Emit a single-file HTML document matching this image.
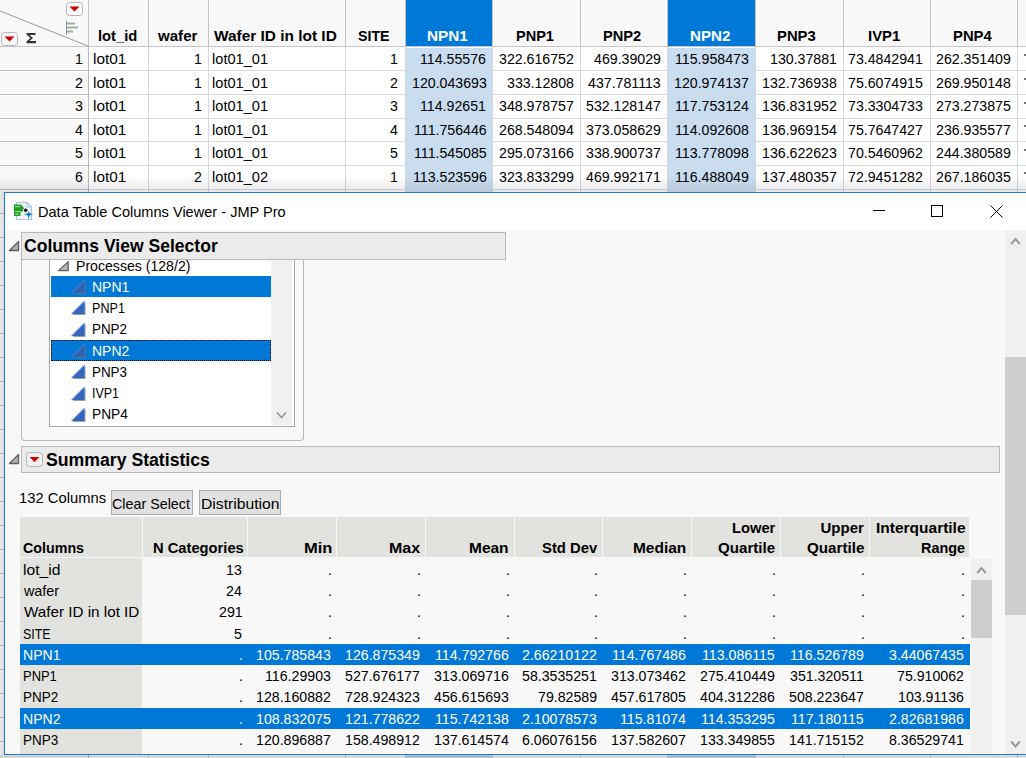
<!DOCTYPE html><html><head><meta charset="utf-8"><style>
*{margin:0;padding:0;box-sizing:border-box}
html,body{width:1026px;height:758px;overflow:hidden;background:#fff;font-family:"Liberation Sans",sans-serif;color:#000}
.abs{position:absolute}
.t{position:absolute;white-space:nowrap;line-height:1;transform-origin:0 0}
.b{font-weight:bold}
</style></head><body>
<div class="abs" style="left:0px;top:0px;width:1026px;height:46px;background:#f8f8f8;"></div>
<div class="abs" style="left:0px;top:46px;width:88px;height:712px;background:#f8f8f8;"></div>
<div class="abs" style="left:406px;top:0px;width:86px;height:46px;background:#0078d7;"></div>
<div class="abs" style="left:406px;top:48px;width:86px;height:710px;background:#c9ddf0;"></div>
<div class="abs" style="left:668px;top:0px;width:87px;height:46px;background:#0078d7;"></div>
<div class="abs" style="left:668px;top:48px;width:87px;height:710px;background:#c9ddf0;"></div>
<div class="abs" style="left:88px;top:0px;width:1px;height:46px;background:#c2c2c2;"></div>
<div class="abs" style="left:88px;top:46px;width:1px;height:712px;background:#b9b9b9;"></div>
<div class="abs" style="left:148px;top:0px;width:1px;height:46px;background:#c2c2c2;"></div>
<div class="abs" style="left:149px;top:0px;width:1px;height:46px;background:#fdfdfd;"></div>
<div class="abs" style="left:148px;top:46px;width:1px;height:712px;background:#d6d6de;"></div>
<div class="abs" style="left:208px;top:0px;width:1px;height:46px;background:#c2c2c2;"></div>
<div class="abs" style="left:209px;top:0px;width:1px;height:46px;background:#fdfdfd;"></div>
<div class="abs" style="left:208px;top:46px;width:1px;height:712px;background:#d6d6de;"></div>
<div class="abs" style="left:345px;top:0px;width:1px;height:46px;background:#c2c2c2;"></div>
<div class="abs" style="left:346px;top:0px;width:1px;height:46px;background:#fdfdfd;"></div>
<div class="abs" style="left:345px;top:46px;width:1px;height:712px;background:#d6d6de;"></div>
<div class="abs" style="left:405px;top:0px;width:1px;height:46px;background:#c2c2c2;"></div>
<div class="abs" style="left:405px;top:46px;width:1px;height:712px;background:#d6d6de;"></div>
<div class="abs" style="left:492px;top:0px;width:1px;height:46px;background:#c2c2c2;"></div>
<div class="abs" style="left:493px;top:0px;width:1px;height:46px;background:#fdfdfd;"></div>
<div class="abs" style="left:492px;top:46px;width:1px;height:712px;background:#d6d6de;"></div>
<div class="abs" style="left:580px;top:0px;width:1px;height:46px;background:#c2c2c2;"></div>
<div class="abs" style="left:581px;top:0px;width:1px;height:46px;background:#fdfdfd;"></div>
<div class="abs" style="left:580px;top:46px;width:1px;height:712px;background:#d6d6de;"></div>
<div class="abs" style="left:667px;top:0px;width:1px;height:46px;background:#c2c2c2;"></div>
<div class="abs" style="left:667px;top:46px;width:1px;height:712px;background:#d6d6de;"></div>
<div class="abs" style="left:755px;top:0px;width:1px;height:46px;background:#c2c2c2;"></div>
<div class="abs" style="left:756px;top:0px;width:1px;height:46px;background:#fdfdfd;"></div>
<div class="abs" style="left:755px;top:46px;width:1px;height:712px;background:#d6d6de;"></div>
<div class="abs" style="left:843px;top:0px;width:1px;height:46px;background:#c2c2c2;"></div>
<div class="abs" style="left:844px;top:0px;width:1px;height:46px;background:#fdfdfd;"></div>
<div class="abs" style="left:843px;top:46px;width:1px;height:712px;background:#d6d6de;"></div>
<div class="abs" style="left:930px;top:0px;width:1px;height:46px;background:#c2c2c2;"></div>
<div class="abs" style="left:931px;top:0px;width:1px;height:46px;background:#fdfdfd;"></div>
<div class="abs" style="left:930px;top:46px;width:1px;height:712px;background:#d6d6de;"></div>
<div class="abs" style="left:1017px;top:0px;width:1px;height:46px;background:#c2c2c2;"></div>
<div class="abs" style="left:1018px;top:0px;width:1px;height:46px;background:#fdfdfd;"></div>
<div class="abs" style="left:1017px;top:46px;width:1px;height:712px;background:#d6d6de;"></div>
<div class="abs" style="left:0px;top:46px;width:1026px;height:1px;background:#c6c6c6;"></div>
<div class="abs" style="left:0px;top:70px;width:88px;height:1px;background:#bebebe;"></div>
<div class="abs" style="left:0px;top:71px;width:88px;height:1px;background:#fdfdfd;"></div>
<div class="abs" style="left:89px;top:70px;width:937px;height:1px;background:#d8d8e0;"></div>
<div class="abs" style="left:0px;top:94px;width:88px;height:1px;background:#bebebe;"></div>
<div class="abs" style="left:0px;top:95px;width:88px;height:1px;background:#fdfdfd;"></div>
<div class="abs" style="left:89px;top:94px;width:937px;height:1px;background:#d8d8e0;"></div>
<div class="abs" style="left:0px;top:118px;width:88px;height:1px;background:#bebebe;"></div>
<div class="abs" style="left:0px;top:119px;width:88px;height:1px;background:#fdfdfd;"></div>
<div class="abs" style="left:89px;top:118px;width:937px;height:1px;background:#d8d8e0;"></div>
<div class="abs" style="left:0px;top:141px;width:88px;height:1px;background:#bebebe;"></div>
<div class="abs" style="left:0px;top:142px;width:88px;height:1px;background:#fdfdfd;"></div>
<div class="abs" style="left:89px;top:141px;width:937px;height:1px;background:#d8d8e0;"></div>
<div class="abs" style="left:0px;top:165px;width:88px;height:1px;background:#bebebe;"></div>
<div class="abs" style="left:0px;top:166px;width:88px;height:1px;background:#fdfdfd;"></div>
<div class="abs" style="left:89px;top:165px;width:937px;height:1px;background:#d8d8e0;"></div>
<div class="abs" style="left:0px;top:189px;width:88px;height:1px;background:#bebebe;"></div>
<div class="abs" style="left:0px;top:190px;width:88px;height:1px;background:#fdfdfd;"></div>
<div class="abs" style="left:89px;top:189px;width:937px;height:1px;background:#d8d8e0;"></div>
<div class="abs" style="left:0px;top:213px;width:88px;height:1px;background:#bebebe;"></div>
<div class="abs" style="left:0px;top:214px;width:88px;height:1px;background:#fdfdfd;"></div>
<div class="abs" style="left:89px;top:213px;width:937px;height:1px;background:#d8d8e0;"></div>
<div class="abs" style="left:0px;top:237px;width:88px;height:1px;background:#bebebe;"></div>
<div class="abs" style="left:0px;top:238px;width:88px;height:1px;background:#fdfdfd;"></div>
<div class="abs" style="left:89px;top:237px;width:937px;height:1px;background:#d8d8e0;"></div>
<div class="abs" style="left:0px;top:261px;width:88px;height:1px;background:#bebebe;"></div>
<div class="abs" style="left:0px;top:262px;width:88px;height:1px;background:#fdfdfd;"></div>
<div class="abs" style="left:89px;top:261px;width:937px;height:1px;background:#d8d8e0;"></div>
<div class="abs" style="left:0px;top:285px;width:88px;height:1px;background:#bebebe;"></div>
<div class="abs" style="left:0px;top:286px;width:88px;height:1px;background:#fdfdfd;"></div>
<div class="abs" style="left:89px;top:285px;width:937px;height:1px;background:#d8d8e0;"></div>
<div class="abs" style="left:0px;top:309px;width:88px;height:1px;background:#bebebe;"></div>
<div class="abs" style="left:0px;top:310px;width:88px;height:1px;background:#fdfdfd;"></div>
<div class="abs" style="left:89px;top:309px;width:937px;height:1px;background:#d8d8e0;"></div>
<div class="abs" style="left:0px;top:333px;width:88px;height:1px;background:#bebebe;"></div>
<div class="abs" style="left:0px;top:334px;width:88px;height:1px;background:#fdfdfd;"></div>
<div class="abs" style="left:89px;top:333px;width:937px;height:1px;background:#d8d8e0;"></div>
<div class="abs" style="left:0px;top:357px;width:88px;height:1px;background:#bebebe;"></div>
<div class="abs" style="left:0px;top:358px;width:88px;height:1px;background:#fdfdfd;"></div>
<div class="abs" style="left:89px;top:357px;width:937px;height:1px;background:#d8d8e0;"></div>
<div class="abs" style="left:0px;top:381px;width:88px;height:1px;background:#bebebe;"></div>
<div class="abs" style="left:0px;top:382px;width:88px;height:1px;background:#fdfdfd;"></div>
<div class="abs" style="left:89px;top:381px;width:937px;height:1px;background:#d8d8e0;"></div>
<div class="abs" style="left:0px;top:405px;width:88px;height:1px;background:#bebebe;"></div>
<div class="abs" style="left:0px;top:406px;width:88px;height:1px;background:#fdfdfd;"></div>
<div class="abs" style="left:89px;top:405px;width:937px;height:1px;background:#d8d8e0;"></div>
<div class="abs" style="left:0px;top:429px;width:88px;height:1px;background:#bebebe;"></div>
<div class="abs" style="left:0px;top:430px;width:88px;height:1px;background:#fdfdfd;"></div>
<div class="abs" style="left:89px;top:429px;width:937px;height:1px;background:#d8d8e0;"></div>
<div class="abs" style="left:0px;top:453px;width:88px;height:1px;background:#bebebe;"></div>
<div class="abs" style="left:0px;top:454px;width:88px;height:1px;background:#fdfdfd;"></div>
<div class="abs" style="left:89px;top:453px;width:937px;height:1px;background:#d8d8e0;"></div>
<div class="abs" style="left:0px;top:477px;width:88px;height:1px;background:#bebebe;"></div>
<div class="abs" style="left:0px;top:478px;width:88px;height:1px;background:#fdfdfd;"></div>
<div class="abs" style="left:89px;top:477px;width:937px;height:1px;background:#d8d8e0;"></div>
<div class="abs" style="left:0px;top:501px;width:88px;height:1px;background:#bebebe;"></div>
<div class="abs" style="left:0px;top:502px;width:88px;height:1px;background:#fdfdfd;"></div>
<div class="abs" style="left:89px;top:501px;width:937px;height:1px;background:#d8d8e0;"></div>
<div class="abs" style="left:0px;top:525px;width:88px;height:1px;background:#bebebe;"></div>
<div class="abs" style="left:0px;top:526px;width:88px;height:1px;background:#fdfdfd;"></div>
<div class="abs" style="left:89px;top:525px;width:937px;height:1px;background:#d8d8e0;"></div>
<div class="abs" style="left:0px;top:549px;width:88px;height:1px;background:#bebebe;"></div>
<div class="abs" style="left:0px;top:550px;width:88px;height:1px;background:#fdfdfd;"></div>
<div class="abs" style="left:89px;top:549px;width:937px;height:1px;background:#d8d8e0;"></div>
<div class="abs" style="left:0px;top:573px;width:88px;height:1px;background:#bebebe;"></div>
<div class="abs" style="left:0px;top:574px;width:88px;height:1px;background:#fdfdfd;"></div>
<div class="abs" style="left:89px;top:573px;width:937px;height:1px;background:#d8d8e0;"></div>
<div class="abs" style="left:0px;top:597px;width:88px;height:1px;background:#bebebe;"></div>
<div class="abs" style="left:0px;top:598px;width:88px;height:1px;background:#fdfdfd;"></div>
<div class="abs" style="left:89px;top:597px;width:937px;height:1px;background:#d8d8e0;"></div>
<div class="abs" style="left:0px;top:621px;width:88px;height:1px;background:#bebebe;"></div>
<div class="abs" style="left:0px;top:622px;width:88px;height:1px;background:#fdfdfd;"></div>
<div class="abs" style="left:89px;top:621px;width:937px;height:1px;background:#d8d8e0;"></div>
<div class="abs" style="left:0px;top:645px;width:88px;height:1px;background:#bebebe;"></div>
<div class="abs" style="left:0px;top:646px;width:88px;height:1px;background:#fdfdfd;"></div>
<div class="abs" style="left:89px;top:645px;width:937px;height:1px;background:#d8d8e0;"></div>
<div class="abs" style="left:0px;top:669px;width:88px;height:1px;background:#bebebe;"></div>
<div class="abs" style="left:0px;top:670px;width:88px;height:1px;background:#fdfdfd;"></div>
<div class="abs" style="left:89px;top:669px;width:937px;height:1px;background:#d8d8e0;"></div>
<div class="abs" style="left:0px;top:693px;width:88px;height:1px;background:#bebebe;"></div>
<div class="abs" style="left:0px;top:694px;width:88px;height:1px;background:#fdfdfd;"></div>
<div class="abs" style="left:89px;top:693px;width:937px;height:1px;background:#d8d8e0;"></div>
<div class="abs" style="left:0px;top:717px;width:88px;height:1px;background:#bebebe;"></div>
<div class="abs" style="left:0px;top:718px;width:88px;height:1px;background:#fdfdfd;"></div>
<div class="abs" style="left:89px;top:717px;width:937px;height:1px;background:#d8d8e0;"></div>
<div class="abs" style="left:0px;top:741px;width:88px;height:1px;background:#bebebe;"></div>
<div class="abs" style="left:0px;top:742px;width:88px;height:1px;background:#fdfdfd;"></div>
<div class="abs" style="left:89px;top:741px;width:937px;height:1px;background:#d8d8e0;"></div>
<div class="t b" style="left:98.42px;top:28.00px;font-size:15px;color:#000;transform:scaleX(0.984)">lot_id</div>
<div class="t b" style="left:158.40px;top:28.00px;font-size:15px;color:#000;transform:scaleX(1.005)">wafer</div>
<div class="t b" style="left:214.30px;top:28.00px;font-size:15px;color:#000;transform:scaleX(1.028)">Wafer ID in lot ID</div>
<div class="t b" style="left:357.75px;top:28.00px;font-size:15px;color:#000;transform:scaleX(0.947)">SITE</div>
<div class="t b" style="left:426.68px;top:28.00px;font-size:15px;color:#fff;transform:scaleX(1.021)">NPN1</div>
<div class="t b" style="left:515.83px;top:28.00px;font-size:15px;color:#000;transform:scaleX(0.968)">PNP1</div>
<div class="t b" style="left:602.52px;top:28.00px;font-size:15px;color:#000;transform:scaleX(0.976)">PNP2</div>
<div class="t b" style="left:690.49px;top:28.00px;font-size:15px;color:#fff;transform:scaleX(1.010)">NPN2</div>
<div class="t b" style="left:777.41px;top:28.00px;font-size:15px;color:#000;transform:scaleX(0.989)">PNP3</div>
<div class="t b" style="left:868.41px;top:28.00px;font-size:15px;color:#000;transform:scaleX(0.994)">IVP1</div>
<div class="t b" style="left:952.61px;top:28.00px;font-size:15px;color:#000;transform:scaleX(0.989)">PNP4</div>
<div class="t" style="left:74.69px;top:51.00px;font-size:15.5px;color:#000;transform:scaleX(0.914)">1</div>
<div class="t" style="left:92.58px;top:51.00px;font-size:15px;color:#000;transform:scaleX(1.023)">lot01</div>
<div class="t" style="left:193.89px;top:51.00px;font-size:15.5px;color:#000;transform:scaleX(0.914)">1</div>
<div class="t" style="left:212.43px;top:51.00px;font-size:15px;color:#000;transform:scaleX(0.975)">lot01_01</div>
<div class="t" style="left:389.69px;top:51.00px;font-size:15.5px;color:#000;transform:scaleX(0.914)">1</div>
<div class="t" style="left:420.19px;top:51.00px;font-size:15.5px;color:#000;transform:scaleX(0.914)">114.55576</div>
<div class="t" style="left:499.47px;top:51.00px;font-size:15.5px;color:#000;transform:scaleX(0.914)">322.616752</div>
<div class="t" style="left:593.78px;top:51.00px;font-size:15.5px;color:#000;transform:scaleX(0.914)">469.39029</div>
<div class="t" style="left:675.38px;top:51.00px;font-size:15.5px;color:#000;transform:scaleX(0.914)">115.958473</div>
<div class="t" style="left:769.78px;top:51.00px;font-size:15.5px;color:#000;transform:scaleX(0.914)">130.37881</div>
<div class="t" style="left:848.17px;top:51.00px;font-size:15.5px;color:#000;transform:scaleX(0.914)">73.4842941</div>
<div class="t" style="left:936.17px;top:51.00px;font-size:15.5px;color:#000;transform:scaleX(0.914)">262.351409</div>
<div class="abs" style="left:1024px;top:54px;width:2px;height:2px;background:rgba(0,0,0,0.55);"></div>
<div class="t" style="left:74.69px;top:74.54px;font-size:15.5px;color:#000;transform:scaleX(0.914)">2</div>
<div class="t" style="left:92.58px;top:74.54px;font-size:15px;color:#000;transform:scaleX(1.023)">lot01</div>
<div class="t" style="left:193.89px;top:74.54px;font-size:15.5px;color:#000;transform:scaleX(0.914)">1</div>
<div class="t" style="left:212.43px;top:74.54px;font-size:15px;color:#000;transform:scaleX(0.975)">lot01_01</div>
<div class="t" style="left:389.69px;top:74.54px;font-size:15.5px;color:#000;transform:scaleX(0.914)">2</div>
<div class="t" style="left:411.97px;top:74.54px;font-size:15.5px;color:#000;transform:scaleX(0.914)">120.043693</div>
<div class="t" style="left:506.78px;top:74.54px;font-size:15.5px;color:#000;transform:scaleX(0.914)">333.12808</div>
<div class="t" style="left:588.29px;top:74.54px;font-size:15.5px;color:#000;transform:scaleX(0.914)">437.781113</div>
<div class="t" style="left:674.47px;top:74.54px;font-size:15.5px;color:#000;transform:scaleX(0.914)">120.974137</div>
<div class="t" style="left:762.47px;top:74.54px;font-size:15.5px;color:#000;transform:scaleX(0.914)">132.736938</div>
<div class="t" style="left:848.17px;top:74.54px;font-size:15.5px;color:#000;transform:scaleX(0.914)">75.6074915</div>
<div class="t" style="left:936.17px;top:74.54px;font-size:15.5px;color:#000;transform:scaleX(0.914)">269.950148</div>
<div class="abs" style="left:1024px;top:78px;width:2px;height:2px;background:rgba(0,0,0,0.55);"></div>
<div class="t" style="left:74.69px;top:98.08px;font-size:15.5px;color:#000;transform:scaleX(0.914)">3</div>
<div class="t" style="left:92.58px;top:98.08px;font-size:15px;color:#000;transform:scaleX(1.023)">lot01</div>
<div class="t" style="left:193.89px;top:98.08px;font-size:15.5px;color:#000;transform:scaleX(0.914)">1</div>
<div class="t" style="left:212.43px;top:98.08px;font-size:15px;color:#000;transform:scaleX(0.975)">lot01_01</div>
<div class="t" style="left:389.69px;top:98.08px;font-size:15.5px;color:#000;transform:scaleX(0.914)">3</div>
<div class="t" style="left:420.19px;top:98.08px;font-size:15.5px;color:#000;transform:scaleX(0.914)">114.92651</div>
<div class="t" style="left:499.47px;top:98.08px;font-size:15.5px;color:#000;transform:scaleX(0.914)">348.978757</div>
<div class="t" style="left:586.47px;top:98.08px;font-size:15.5px;color:#000;transform:scaleX(0.914)">532.128147</div>
<div class="t" style="left:675.38px;top:98.08px;font-size:15.5px;color:#000;transform:scaleX(0.914)">117.753124</div>
<div class="t" style="left:762.47px;top:98.08px;font-size:15.5px;color:#000;transform:scaleX(0.914)">136.831952</div>
<div class="t" style="left:848.17px;top:98.08px;font-size:15.5px;color:#000;transform:scaleX(0.914)">73.3304733</div>
<div class="t" style="left:936.17px;top:98.08px;font-size:15.5px;color:#000;transform:scaleX(0.914)">273.273875</div>
<div class="abs" style="left:1024px;top:102px;width:2px;height:2px;background:rgba(0,0,0,0.55);"></div>
<div class="t" style="left:74.69px;top:121.62px;font-size:15.5px;color:#000;transform:scaleX(0.914)">4</div>
<div class="t" style="left:92.58px;top:121.62px;font-size:15px;color:#000;transform:scaleX(1.023)">lot01</div>
<div class="t" style="left:193.89px;top:121.62px;font-size:15.5px;color:#000;transform:scaleX(0.914)">1</div>
<div class="t" style="left:212.43px;top:121.62px;font-size:15px;color:#000;transform:scaleX(0.975)">lot01_01</div>
<div class="t" style="left:389.69px;top:121.62px;font-size:15.5px;color:#000;transform:scaleX(0.914)">4</div>
<div class="t" style="left:413.79px;top:121.62px;font-size:15.5px;color:#000;transform:scaleX(0.914)">111.756446</div>
<div class="t" style="left:498.55px;top:121.62px;font-size:15.5px;color:#000;transform:scaleX(0.914)">268.548094</div>
<div class="t" style="left:586.47px;top:121.62px;font-size:15.5px;color:#000;transform:scaleX(0.914)">373.058629</div>
<div class="t" style="left:675.38px;top:121.62px;font-size:15.5px;color:#000;transform:scaleX(0.914)">114.092608</div>
<div class="t" style="left:761.55px;top:121.62px;font-size:15.5px;color:#000;transform:scaleX(0.914)">136.969154</div>
<div class="t" style="left:848.17px;top:121.62px;font-size:15.5px;color:#000;transform:scaleX(0.914)">75.7647427</div>
<div class="t" style="left:936.17px;top:121.62px;font-size:15.5px;color:#000;transform:scaleX(0.914)">236.935577</div>
<div class="abs" style="left:1024px;top:125px;width:2px;height:2px;background:rgba(0,0,0,0.55);"></div>
<div class="t" style="left:74.69px;top:145.16px;font-size:15.5px;color:#000;transform:scaleX(0.914)">5</div>
<div class="t" style="left:92.58px;top:145.16px;font-size:15px;color:#000;transform:scaleX(1.023)">lot01</div>
<div class="t" style="left:193.89px;top:145.16px;font-size:15.5px;color:#000;transform:scaleX(0.914)">1</div>
<div class="t" style="left:212.43px;top:145.16px;font-size:15px;color:#000;transform:scaleX(0.975)">lot01_01</div>
<div class="t" style="left:389.69px;top:145.16px;font-size:15.5px;color:#000;transform:scaleX(0.914)">5</div>
<div class="t" style="left:413.79px;top:145.16px;font-size:15.5px;color:#000;transform:scaleX(0.914)">111.545085</div>
<div class="t" style="left:499.47px;top:145.16px;font-size:15.5px;color:#000;transform:scaleX(0.914)">295.073166</div>
<div class="t" style="left:586.47px;top:145.16px;font-size:15.5px;color:#000;transform:scaleX(0.914)">338.900737</div>
<div class="t" style="left:675.38px;top:145.16px;font-size:15.5px;color:#000;transform:scaleX(0.914)">113.778098</div>
<div class="t" style="left:762.47px;top:145.16px;font-size:15.5px;color:#000;transform:scaleX(0.914)">136.622623</div>
<div class="t" style="left:848.17px;top:145.16px;font-size:15.5px;color:#000;transform:scaleX(0.914)">70.5460962</div>
<div class="t" style="left:936.17px;top:145.16px;font-size:15.5px;color:#000;transform:scaleX(0.914)">244.380589</div>
<div class="abs" style="left:1024px;top:149px;width:2px;height:2px;background:rgba(0,0,0,0.55);"></div>
<div class="t" style="left:74.69px;top:168.70px;font-size:15.5px;color:#000;transform:scaleX(0.914)">6</div>
<div class="t" style="left:92.58px;top:168.70px;font-size:15px;color:#000;transform:scaleX(1.023)">lot01</div>
<div class="t" style="left:193.89px;top:168.70px;font-size:15.5px;color:#000;transform:scaleX(0.914)">2</div>
<div class="t" style="left:212.43px;top:168.70px;font-size:15px;color:#000;transform:scaleX(0.975)">lot01_02</div>
<div class="t" style="left:389.69px;top:168.70px;font-size:15.5px;color:#000;transform:scaleX(0.914)">1</div>
<div class="t" style="left:412.88px;top:168.70px;font-size:15.5px;color:#000;transform:scaleX(0.914)">113.523596</div>
<div class="t" style="left:499.47px;top:168.70px;font-size:15.5px;color:#000;transform:scaleX(0.914)">323.833299</div>
<div class="t" style="left:586.47px;top:168.70px;font-size:15.5px;color:#000;transform:scaleX(0.914)">469.992171</div>
<div class="t" style="left:675.38px;top:168.70px;font-size:15.5px;color:#000;transform:scaleX(0.914)">116.488049</div>
<div class="t" style="left:762.47px;top:168.70px;font-size:15.5px;color:#000;transform:scaleX(0.914)">137.480357</div>
<div class="t" style="left:848.17px;top:168.70px;font-size:15.5px;color:#000;transform:scaleX(0.914)">72.9451282</div>
<div class="t" style="left:936.17px;top:168.70px;font-size:15.5px;color:#000;transform:scaleX(0.914)">267.186035</div>
<div class="abs" style="left:1024px;top:172px;width:2px;height:2px;background:rgba(0,0,0,0.55);"></div>
<svg class="abs" style="left:0;top:0" width="88" height="46" viewBox="0 0 88 46"><line x1="0" y1="11" x2="88" y2="46" stroke="#9a9a9a" stroke-width="1"/><rect x="66.5" y="2.5" width="16" height="13" rx="3" fill="#f9f9f9" stroke="#b5b5b5"/><path d="M69.5 6.5 L79.5 6.5 L74.5 11.5 Z" fill="#d10000"/><rect x="1.5" y="32.5" width="16" height="13" rx="3" fill="#f9f9f9" stroke="#b5b5b5"/><path d="M4.5 36.5 L14.5 36.5 L9.5 41.5 Z" fill="#d10000"/><rect x="66" y="21" width="1" height="14" fill="#7d93b8"/><rect x="67" y="22.5" width="8" height="2" fill="#9cb09c"/><rect x="67" y="26.5" width="11" height="2" fill="#9cb09c"/><rect x="67" y="30.5" width="6" height="2" fill="#9cb09c"/><path d="M26.5 33 H35.5 V35 H29.5 L33 38 L29.5 41 H36 V43.2 H26.5 V41.5 L30.3 38 L26.5 34.5 Z" fill="#333"/></svg>
<div class="abs" style="left:0px;top:176px;width:1026px;height:16px;background:linear-gradient(to bottom,rgba(0,0,0,0),rgba(0,0,0,0.09));"></div>
<div class="abs" style="left:4px;top:192px;width:1024px;height:563px;background:#f8f8f8;border:1px solid #1a7fd4"></div>
<div class="abs" style="left:5px;top:193px;width:1022px;height:37px;background:#fff;"></div>
<div class="abs" style="left:5px;top:230px;width:1px;height:524px;background:#fff;"></div>
<div class="abs" style="left:5px;top:753px;width:1021px;height:1px;background:#fff;"></div>
<svg class="abs" style="left:10px;top:200px" width="26" height="24" viewBox="0 0 26 24"><path d="M6.5 2.5 H17 L21.5 7 V19.5 H6.5 Z" fill="#f3f7fc" stroke="#a9c3e3" stroke-width="1.2"/><path d="M17 2.5 V7 H21.5" fill="none" stroke="#a9c3e3" stroke-width="1"/><path d="M4 4.5 H11 L14 8 L12 12 H10.5 V16 H4 Z" fill="#1f9e1f"/><rect x="5" y="6" width="5" height="1.2" fill="#8fdc8f"/><rect x="5" y="11" width="6" height="1.2" fill="#8fdc8f"/><rect x="5" y="13.5" width="3.5" height="1.2" fill="#8fdc8f"/><circle cx="15.7" cy="10.3" r="1.8" fill="#111"/><path d="M18.7 10.2 C19.0 12.8 19.4 13.5 23.9 14.2 C19.4 14.9 19.0 15.6 18.7 20.8 C18.4 15.6 18.0 14.9 13.3 14.2 C18.0 13.5 18.4 12.8 18.7 10.2 Z" fill="#1c80d0"/></svg>
<div class="t" style="left:38.03px;top:204.00px;font-size:15px;color:#000;transform:scaleX(0.971)">Data Table Columns Viewer - JMP Pro</div>
<div class="abs" style="left:873px;top:210px;width:12px;height:1px;background:#000;"></div>
<div class="abs" style="left:931px;top:205px;width:12px;height:12px;border:1px solid #000"></div>
<svg class="abs" style="left:990px;top:205px" width="13" height="13" viewBox="0 0 13 13"><path d="M0.5 0.5 L12.5 12.5 M12.5 0.5 L0.5 12.5" stroke="#000" stroke-width="1"/></svg>
<div class="abs" style="left:1005px;top:230px;width:21px;height:524px;background:#f0f0f0;"></div>
<div class="abs" style="left:1005px;top:357px;width:21px;height:258px;background:#cdcdcd;"></div>
<svg class="abs" style="left:1009px;top:236px" width="13" height="10" viewBox="0 0 13 10"><path d="M2.2 8 L6.5 3 L10.8 8" fill="none" stroke="#9a9a9a" stroke-width="2"/></svg>
<svg class="abs" style="left:1009px;top:739px" width="13" height="10" viewBox="0 0 13 10"><path d="M2.2 2.5 L6.5 7.5 L10.8 2.5" fill="none" stroke="#9a9a9a" stroke-width="2"/></svg>
<svg class="abs" style="left:8px;top:240px" width="12" height="12" viewBox="0 0 12 12"><path d="M1.5 10.5 L10.5 1.5 L10.5 10.5 Z" fill="#b0b0b0" stroke="#5e5e5e" stroke-width="1.3" stroke-linejoin="round"/></svg>
<div class="abs" style="left:21px;top:259px;width:283px;height:182px;border:1px solid #b9b9b9;border-top:none;border-radius:0 0 4px 4px"></div>
<div class="abs" style="left:49px;top:259px;width:246px;height:168px;background:#fff;border:1px solid #a9a9a9;border-top:none"></div>
<div class="abs" style="left:271px;top:259px;width:21px;height:166px;background:#f0f0f0;"></div>
<svg class="abs" style="left:276px;top:411px" width="11" height="9" viewBox="0 0 11 9"><path d="M1 1.5 L5.5 6.5 L10 1.5" fill="none" stroke="#9a9a9a" stroke-width="1.8"/></svg>
<div class="abs" style="left:21px;top:232px;width:485px;height:28px;background:#ebebeb;border:1px solid #b9b9b9"></div>
<div class="t b" style="left:23.72px;top:237.40px;font-size:18px;color:#000;transform:scaleX(0.975)">Columns View Selector</div>
<svg class="abs" style="left:56.5px;top:259.5px" width="13" height="12" viewBox="0 0 13 12"><path d="M1.6 10.6 L11.2 1.6 L11.2 10.6 Z" fill="#b4b4b4" stroke="#606060" stroke-width="1.3" stroke-linejoin="round"/></svg>
<div class="t" style="left:76.06px;top:257.70px;font-size:15px;color:#000;transform:scaleX(0.940)">Processes (128/2)</div>
<div class="abs" style="left:51px;top:276px;width:220px;height:21px;background:#0078d7;"></div>
<svg class="abs" style="left:70px;top:278px" width="18" height="18" viewBox="0 0 18 18"><path d="M2.5 16 L15.5 3 L15.5 16 Z" fill="#777" opacity="0.7"/><path d="M1.5 15 L14.5 2 L14.5 15 Z" fill="#2f62b3"/><path d="M1.5 15 L14.5 2" stroke="#5b8fe0" stroke-width="1"/></svg>
<div class="t" style="left:91.67px;top:278.90px;font-size:15px;color:#fff;transform:scaleX(0.933)">NPN1</div>
<svg class="abs" style="left:70px;top:299px" width="18" height="18" viewBox="0 0 18 18"><path d="M2.5 16 L15.5 3 L15.5 16 Z" fill="#777" opacity="0.7"/><path d="M1.5 15 L14.5 2 L14.5 15 Z" fill="#3567c0"/><path d="M1.5 15 L14.5 2" stroke="#5b8fe0" stroke-width="1"/></svg>
<div class="t" style="left:91.76px;top:300.15px;font-size:15px;color:#000;transform:scaleX(0.839)">PNP1</div>
<svg class="abs" style="left:70px;top:321px" width="18" height="18" viewBox="0 0 18 18"><path d="M2.5 16 L15.5 3 L15.5 16 Z" fill="#777" opacity="0.7"/><path d="M1.5 15 L14.5 2 L14.5 15 Z" fill="#3567c0"/><path d="M1.5 15 L14.5 2" stroke="#5b8fe0" stroke-width="1"/></svg>
<div class="t" style="left:91.71px;top:321.40px;font-size:15px;color:#000;transform:scaleX(0.892)">PNP2</div>
<div class="abs" style="left:51px;top:340px;width:220px;height:21px;background:#0078d7;outline:1px dotted #000;outline-offset:-1px;"></div>
<svg class="abs" style="left:70px;top:342px" width="18" height="18" viewBox="0 0 18 18"><path d="M2.5 16 L15.5 3 L15.5 16 Z" fill="#777" opacity="0.7"/><path d="M1.5 15 L14.5 2 L14.5 15 Z" fill="#2f62b3"/><path d="M1.5 15 L14.5 2" stroke="#5b8fe0" stroke-width="1"/></svg>
<div class="t" style="left:91.67px;top:342.65px;font-size:15px;color:#fff;transform:scaleX(0.933)">NPN2</div>
<svg class="abs" style="left:70px;top:363px" width="18" height="18" viewBox="0 0 18 18"><path d="M2.5 16 L15.5 3 L15.5 16 Z" fill="#777" opacity="0.7"/><path d="M1.5 15 L14.5 2 L14.5 15 Z" fill="#3567c0"/><path d="M1.5 15 L14.5 2" stroke="#5b8fe0" stroke-width="1"/></svg>
<div class="t" style="left:91.71px;top:363.90px;font-size:15px;color:#000;transform:scaleX(0.892)">PNP3</div>
<svg class="abs" style="left:70px;top:385px" width="18" height="18" viewBox="0 0 18 18"><path d="M2.5 16 L15.5 3 L15.5 16 Z" fill="#777" opacity="0.7"/><path d="M1.5 15 L14.5 2 L14.5 15 Z" fill="#3567c0"/><path d="M1.5 15 L14.5 2" stroke="#5b8fe0" stroke-width="1"/></svg>
<div class="t" style="left:92.17px;top:385.15px;font-size:15px;color:#000;transform:scaleX(0.832)">IVP1</div>
<svg class="abs" style="left:70px;top:406px" width="18" height="18" viewBox="0 0 18 18"><path d="M2.5 16 L15.5 3 L15.5 16 Z" fill="#777" opacity="0.7"/><path d="M1.5 15 L14.5 2 L14.5 15 Z" fill="#3567c0"/><path d="M1.5 15 L14.5 2" stroke="#5b8fe0" stroke-width="1"/></svg>
<div class="t" style="left:91.68px;top:406.40px;font-size:15px;color:#000;transform:scaleX(0.916)">PNP4</div>
<svg class="abs" style="left:8px;top:453px" width="12" height="12" viewBox="0 0 12 12"><path d="M1.5 10.5 L10.5 1.5 L10.5 10.5 Z" fill="#b0b0b0" stroke="#5e5e5e" stroke-width="1.3" stroke-linejoin="round"/></svg>
<div class="abs" style="left:21px;top:446px;width:979px;height:27px;background:#ebebeb;border:1px solid #b9b9b9"></div>
<svg class="abs" style="left:26px;top:452px" width="18" height="16" viewBox="0 0 18 16"><rect x="0.5" y="0.5" width="16" height="14" rx="3" fill="#f0f0f0" stroke="#b5b5b5"/><path d="M3.5 5 L13.5 5 L8.5 10 Z" fill="#d10000"/></svg>
<div class="t b" style="left:45.82px;top:450.50px;font-size:18px;color:#000;transform:scaleX(0.981)">Summary Statistics</div>
<div class="t" style="left:19.31px;top:490.30px;font-size:15px;color:#000;transform:scaleX(0.985)">132 Columns</div>
<div class="abs" style="left:111px;top:490px;width:82px;height:25px;background:#e1e1e1;border:1px solid #adadad"></div>
<div class="t" style="left:112.35px;top:496.20px;font-size:15px;color:#000;transform:scaleX(0.954)">Clear Select</div>
<div class="abs" style="left:199px;top:490px;width:82px;height:25px;background:#e1e1e1;border:1px solid #adadad"></div>
<div class="t" style="left:200.95px;top:496.20px;font-size:15px;color:#000;transform:scaleX(1.047)">Distribution</div>
<div class="abs" style="left:20px;top:517px;width:122px;height:40px;background:#e2e2de;"></div>
<div class="abs" style="left:143px;top:517px;width:104px;height:40px;background:#e2e2de;"></div>
<div class="abs" style="left:248px;top:517px;width:88px;height:40px;background:#e2e2de;"></div>
<div class="abs" style="left:337px;top:517px;width:88px;height:40px;background:#e2e2de;"></div>
<div class="abs" style="left:426px;top:517px;width:88px;height:40px;background:#e2e2de;"></div>
<div class="abs" style="left:515px;top:517px;width:87px;height:40px;background:#e2e2de;"></div>
<div class="abs" style="left:603px;top:517px;width:88px;height:40px;background:#e2e2de;"></div>
<div class="abs" style="left:692px;top:517px;width:88px;height:40px;background:#e2e2de;"></div>
<div class="abs" style="left:781px;top:517px;width:88px;height:40px;background:#e2e2de;"></div>
<div class="abs" style="left:870px;top:517px;width:99px;height:40px;background:#e2e2de;"></div>
<div class="abs" style="left:20px;top:558px;width:122px;height:196px;background:#e2e2de;"></div>
<div class="t b" style="left:22.75px;top:540.00px;font-size:15px;color:#000;transform:scaleX(0.951)">Columns</div>
<div class="t b" style="left:152.72px;top:540.00px;font-size:15px;color:#000;transform:scaleX(0.981)">N Categories</div>
<div class="t b" style="left:304.30px;top:540.00px;font-size:15px;color:#000;transform:scaleX(1.100)">Min</div>
<div class="t b" style="left:388.53px;top:540.00px;font-size:15px;color:#000;transform:scaleX(1.068)">Max</div>
<div class="t b" style="left:469.37px;top:540.00px;font-size:15px;color:#000;transform:scaleX(1.032)">Mean</div>
<div class="t b" style="left:542.01px;top:540.00px;font-size:15px;color:#000;transform:scaleX(0.989)">Std Dev</div>
<div class="t b" style="left:633.37px;top:540.00px;font-size:15px;color:#000;transform:scaleX(1.030)">Median</div>
<div class="t b" style="left:718.29px;top:540.00px;font-size:15px;color:#000;transform:scaleX(1.009)">Quartile</div>
<div class="t b" style="left:731.62px;top:520.40px;font-size:15px;color:#000;transform:scaleX(0.981)">Lower</div>
<div class="t b" style="left:806.99px;top:540.00px;font-size:15px;color:#000;transform:scaleX(1.013)">Quartile</div>
<div class="t b" style="left:820.50px;top:520.40px;font-size:15px;color:#000">Upper</div>
<div class="t b" style="left:920.54px;top:540.00px;font-size:15px;color:#000;transform:scaleX(0.962)">Range</div>
<div class="t b" style="left:875.97px;top:520.40px;font-size:15px;color:#000;transform:scaleX(1.033)">Interquartile</div>
<div class="t" style="left:22.56px;top:561.77px;font-size:15px;color:#000;transform:scaleX(1.041)">lot_id</div>
<div class="t" style="left:225.96px;top:561.77px;font-size:15.5px;color:#000;transform:scaleX(0.914)">13</div>
<div class="t" style="left:327.76px;top:561.77px;font-size:15.5px;color:#000;transform:scaleX(0.914)">.</div>
<div class="t" style="left:416.76px;top:561.77px;font-size:15.5px;color:#000;transform:scaleX(0.914)">.</div>
<div class="t" style="left:505.76px;top:561.77px;font-size:15.5px;color:#000;transform:scaleX(0.914)">.</div>
<div class="t" style="left:593.76px;top:561.77px;font-size:15.5px;color:#000;transform:scaleX(0.914)">.</div>
<div class="t" style="left:682.76px;top:561.77px;font-size:15.5px;color:#000;transform:scaleX(0.914)">.</div>
<div class="t" style="left:771.76px;top:561.77px;font-size:15.5px;color:#000;transform:scaleX(0.914)">.</div>
<div class="t" style="left:860.76px;top:561.77px;font-size:15.5px;color:#000;transform:scaleX(0.914)">.</div>
<div class="t" style="left:960.76px;top:561.77px;font-size:15.5px;color:#000;transform:scaleX(0.914)">.</div>
<div class="t" style="left:23.60px;top:583.05px;font-size:15px;color:#000;transform:scaleX(0.957)">wafer</div>
<div class="t" style="left:225.96px;top:583.05px;font-size:15.5px;color:#000;transform:scaleX(0.914)">24</div>
<div class="t" style="left:327.76px;top:583.05px;font-size:15.5px;color:#000;transform:scaleX(0.914)">.</div>
<div class="t" style="left:416.76px;top:583.05px;font-size:15.5px;color:#000;transform:scaleX(0.914)">.</div>
<div class="t" style="left:505.76px;top:583.05px;font-size:15.5px;color:#000;transform:scaleX(0.914)">.</div>
<div class="t" style="left:593.76px;top:583.05px;font-size:15.5px;color:#000;transform:scaleX(0.914)">.</div>
<div class="t" style="left:682.76px;top:583.05px;font-size:15.5px;color:#000;transform:scaleX(0.914)">.</div>
<div class="t" style="left:771.76px;top:583.05px;font-size:15.5px;color:#000;transform:scaleX(0.914)">.</div>
<div class="t" style="left:860.76px;top:583.05px;font-size:15.5px;color:#000;transform:scaleX(0.914)">.</div>
<div class="t" style="left:960.76px;top:583.05px;font-size:15.5px;color:#000;transform:scaleX(0.914)">.</div>
<div class="t" style="left:23.60px;top:604.33px;font-size:15px;color:#000;transform:scaleX(1.015)">Wafer ID in lot ID</div>
<div class="t" style="left:218.65px;top:604.33px;font-size:15.5px;color:#000;transform:scaleX(0.914)">291</div>
<div class="t" style="left:327.76px;top:604.33px;font-size:15.5px;color:#000;transform:scaleX(0.914)">.</div>
<div class="t" style="left:416.76px;top:604.33px;font-size:15.5px;color:#000;transform:scaleX(0.914)">.</div>
<div class="t" style="left:505.76px;top:604.33px;font-size:15.5px;color:#000;transform:scaleX(0.914)">.</div>
<div class="t" style="left:593.76px;top:604.33px;font-size:15.5px;color:#000;transform:scaleX(0.914)">.</div>
<div class="t" style="left:682.76px;top:604.33px;font-size:15.5px;color:#000;transform:scaleX(0.914)">.</div>
<div class="t" style="left:771.76px;top:604.33px;font-size:15.5px;color:#000;transform:scaleX(0.914)">.</div>
<div class="t" style="left:860.76px;top:604.33px;font-size:15.5px;color:#000;transform:scaleX(0.914)">.</div>
<div class="t" style="left:960.76px;top:604.33px;font-size:15.5px;color:#000;transform:scaleX(0.914)">.</div>
<div class="t" style="left:22.78px;top:625.61px;font-size:15px;color:#000;transform:scaleX(0.825)">SITE</div>
<div class="t" style="left:234.19px;top:625.61px;font-size:15.5px;color:#000;transform:scaleX(0.914)">5</div>
<div class="t" style="left:327.76px;top:625.61px;font-size:15.5px;color:#000;transform:scaleX(0.914)">.</div>
<div class="t" style="left:416.76px;top:625.61px;font-size:15.5px;color:#000;transform:scaleX(0.914)">.</div>
<div class="t" style="left:505.76px;top:625.61px;font-size:15.5px;color:#000;transform:scaleX(0.914)">.</div>
<div class="t" style="left:593.76px;top:625.61px;font-size:15.5px;color:#000;transform:scaleX(0.914)">.</div>
<div class="t" style="left:682.76px;top:625.61px;font-size:15.5px;color:#000;transform:scaleX(0.914)">.</div>
<div class="t" style="left:771.76px;top:625.61px;font-size:15.5px;color:#000;transform:scaleX(0.914)">.</div>
<div class="t" style="left:860.76px;top:625.61px;font-size:15.5px;color:#000;transform:scaleX(0.914)">.</div>
<div class="t" style="left:960.76px;top:625.61px;font-size:15.5px;color:#000;transform:scaleX(0.914)">.</div>
<div class="abs" style="left:20px;top:644px;width:950px;height:21px;background:#0078d7;"></div>
<div class="t" style="left:22.66px;top:646.89px;font-size:15px;color:#fff;transform:scaleX(0.938)">NPN1</div>
<div class="t" style="left:238.76px;top:646.89px;font-size:15.5px;color:#fff;transform:scaleX(0.914)">.</div>
<div class="t" style="left:256.47px;top:646.89px;font-size:15.5px;color:#fff;transform:scaleX(0.914)">105.785843</div>
<div class="t" style="left:345.47px;top:646.89px;font-size:15.5px;color:#fff;transform:scaleX(0.914)">126.875349</div>
<div class="t" style="left:435.38px;top:646.89px;font-size:15.5px;color:#fff;transform:scaleX(0.914)">114.792766</div>
<div class="t" style="left:522.47px;top:646.89px;font-size:15.5px;color:#fff;transform:scaleX(0.914)">2.66210122</div>
<div class="t" style="left:612.38px;top:646.89px;font-size:15.5px;color:#fff;transform:scaleX(0.914)">114.767486</div>
<div class="t" style="left:702.29px;top:646.89px;font-size:15.5px;color:#fff;transform:scaleX(0.914)">113.086115</div>
<div class="t" style="left:790.38px;top:646.89px;font-size:15.5px;color:#fff;transform:scaleX(0.914)">116.526789</div>
<div class="t" style="left:889.47px;top:646.89px;font-size:15.5px;color:#fff;transform:scaleX(0.914)">3.44067435</div>
<div class="t" style="left:22.74px;top:668.17px;font-size:15px;color:#000;transform:scaleX(0.863)">PNP1</div>
<div class="t" style="left:238.76px;top:668.17px;font-size:15.5px;color:#000;transform:scaleX(0.914)">.</div>
<div class="t" style="left:264.69px;top:668.17px;font-size:15.5px;color:#000;transform:scaleX(0.914)">116.29903</div>
<div class="t" style="left:345.47px;top:668.17px;font-size:15.5px;color:#000;transform:scaleX(0.914)">527.676177</div>
<div class="t" style="left:434.47px;top:668.17px;font-size:15.5px;color:#000;transform:scaleX(0.914)">313.069716</div>
<div class="t" style="left:522.47px;top:668.17px;font-size:15.5px;color:#000;transform:scaleX(0.914)">58.3535251</div>
<div class="t" style="left:611.47px;top:668.17px;font-size:15.5px;color:#000;transform:scaleX(0.914)">313.073462</div>
<div class="t" style="left:700.47px;top:668.17px;font-size:15.5px;color:#000;transform:scaleX(0.914)">275.410449</div>
<div class="t" style="left:790.38px;top:668.17px;font-size:15.5px;color:#000;transform:scaleX(0.914)">351.320511</div>
<div class="t" style="left:896.78px;top:668.17px;font-size:15.5px;color:#000;transform:scaleX(0.914)">75.910062</div>
<div class="t" style="left:22.70px;top:689.45px;font-size:15px;color:#000;transform:scaleX(0.897)">PNP2</div>
<div class="t" style="left:238.76px;top:689.45px;font-size:15.5px;color:#000;transform:scaleX(0.914)">.</div>
<div class="t" style="left:256.47px;top:689.45px;font-size:15.5px;color:#000;transform:scaleX(0.914)">128.160882</div>
<div class="t" style="left:345.47px;top:689.45px;font-size:15.5px;color:#000;transform:scaleX(0.914)">728.924323</div>
<div class="t" style="left:434.47px;top:689.45px;font-size:15.5px;color:#000;transform:scaleX(0.914)">456.615693</div>
<div class="t" style="left:538.00px;top:689.45px;font-size:15.5px;color:#000;transform:scaleX(0.914)">79.82589</div>
<div class="t" style="left:611.47px;top:689.45px;font-size:15.5px;color:#000;transform:scaleX(0.914)">457.617805</div>
<div class="t" style="left:700.47px;top:689.45px;font-size:15.5px;color:#000;transform:scaleX(0.914)">404.312286</div>
<div class="t" style="left:789.47px;top:689.45px;font-size:15.5px;color:#000;transform:scaleX(0.914)">508.223647</div>
<div class="t" style="left:897.69px;top:689.45px;font-size:15.5px;color:#000;transform:scaleX(0.914)">103.91136</div>
<div class="abs" style="left:20px;top:708px;width:950px;height:21px;background:#0078d7;"></div>
<div class="t" style="left:22.66px;top:710.73px;font-size:15px;color:#fff;transform:scaleX(0.938)">NPN2</div>
<div class="t" style="left:238.76px;top:710.73px;font-size:15.5px;color:#fff;transform:scaleX(0.914)">.</div>
<div class="t" style="left:256.47px;top:710.73px;font-size:15.5px;color:#fff;transform:scaleX(0.914)">108.832075</div>
<div class="t" style="left:345.47px;top:710.73px;font-size:15.5px;color:#fff;transform:scaleX(0.914)">121.778622</div>
<div class="t" style="left:435.38px;top:710.73px;font-size:15.5px;color:#fff;transform:scaleX(0.914)">115.742138</div>
<div class="t" style="left:522.47px;top:710.73px;font-size:15.5px;color:#fff;transform:scaleX(0.914)">2.10078573</div>
<div class="t" style="left:619.69px;top:710.73px;font-size:15.5px;color:#fff;transform:scaleX(0.914)">115.81074</div>
<div class="t" style="left:701.38px;top:710.73px;font-size:15.5px;color:#fff;transform:scaleX(0.914)">114.353295</div>
<div class="t" style="left:791.29px;top:710.73px;font-size:15.5px;color:#fff;transform:scaleX(0.914)">117.180115</div>
<div class="t" style="left:889.47px;top:710.73px;font-size:15.5px;color:#fff;transform:scaleX(0.914)">2.82681986</div>
<div class="t" style="left:22.70px;top:732.01px;font-size:15px;color:#000;transform:scaleX(0.897)">PNP3</div>
<div class="t" style="left:238.76px;top:732.01px;font-size:15.5px;color:#000;transform:scaleX(0.914)">.</div>
<div class="t" style="left:256.47px;top:732.01px;font-size:15.5px;color:#000;transform:scaleX(0.914)">120.896887</div>
<div class="t" style="left:345.47px;top:732.01px;font-size:15.5px;color:#000;transform:scaleX(0.914)">158.498912</div>
<div class="t" style="left:433.55px;top:732.01px;font-size:15.5px;color:#000;transform:scaleX(0.914)">137.614574</div>
<div class="t" style="left:522.47px;top:732.01px;font-size:15.5px;color:#000;transform:scaleX(0.914)">6.06076156</div>
<div class="t" style="left:611.47px;top:732.01px;font-size:15.5px;color:#000;transform:scaleX(0.914)">137.582607</div>
<div class="t" style="left:700.47px;top:732.01px;font-size:15.5px;color:#000;transform:scaleX(0.914)">133.349855</div>
<div class="t" style="left:789.47px;top:732.01px;font-size:15.5px;color:#000;transform:scaleX(0.914)">141.715152</div>
<div class="t" style="left:889.47px;top:732.01px;font-size:15.5px;color:#000;transform:scaleX(0.914)">8.36529741</div>
<div class="abs" style="left:971px;top:559px;width:21px;height:194px;background:#f0f0f0;"></div>
<div class="abs" style="left:971px;top:580px;width:21px;height:58px;background:#cdcdcd;"></div>
<svg class="abs" style="left:975px;top:565px" width="13" height="10" viewBox="0 0 13 10"><path d="M2.2 8 L6.5 3 L10.8 8" fill="none" stroke="#9a9a9a" stroke-width="2"/></svg>
<div class="abs" style="left:0px;top:755px;width:1026px;height:3px;background:linear-gradient(to bottom,rgba(0,0,0,0.16),rgba(0,0,0,0.14));"></div>
<div class="abs" style="left:0px;top:192px;width:4px;height:563px;background:linear-gradient(to right,rgba(0,0,0,0.06),rgba(0,0,0,0.12));"></div>
</body></html>
